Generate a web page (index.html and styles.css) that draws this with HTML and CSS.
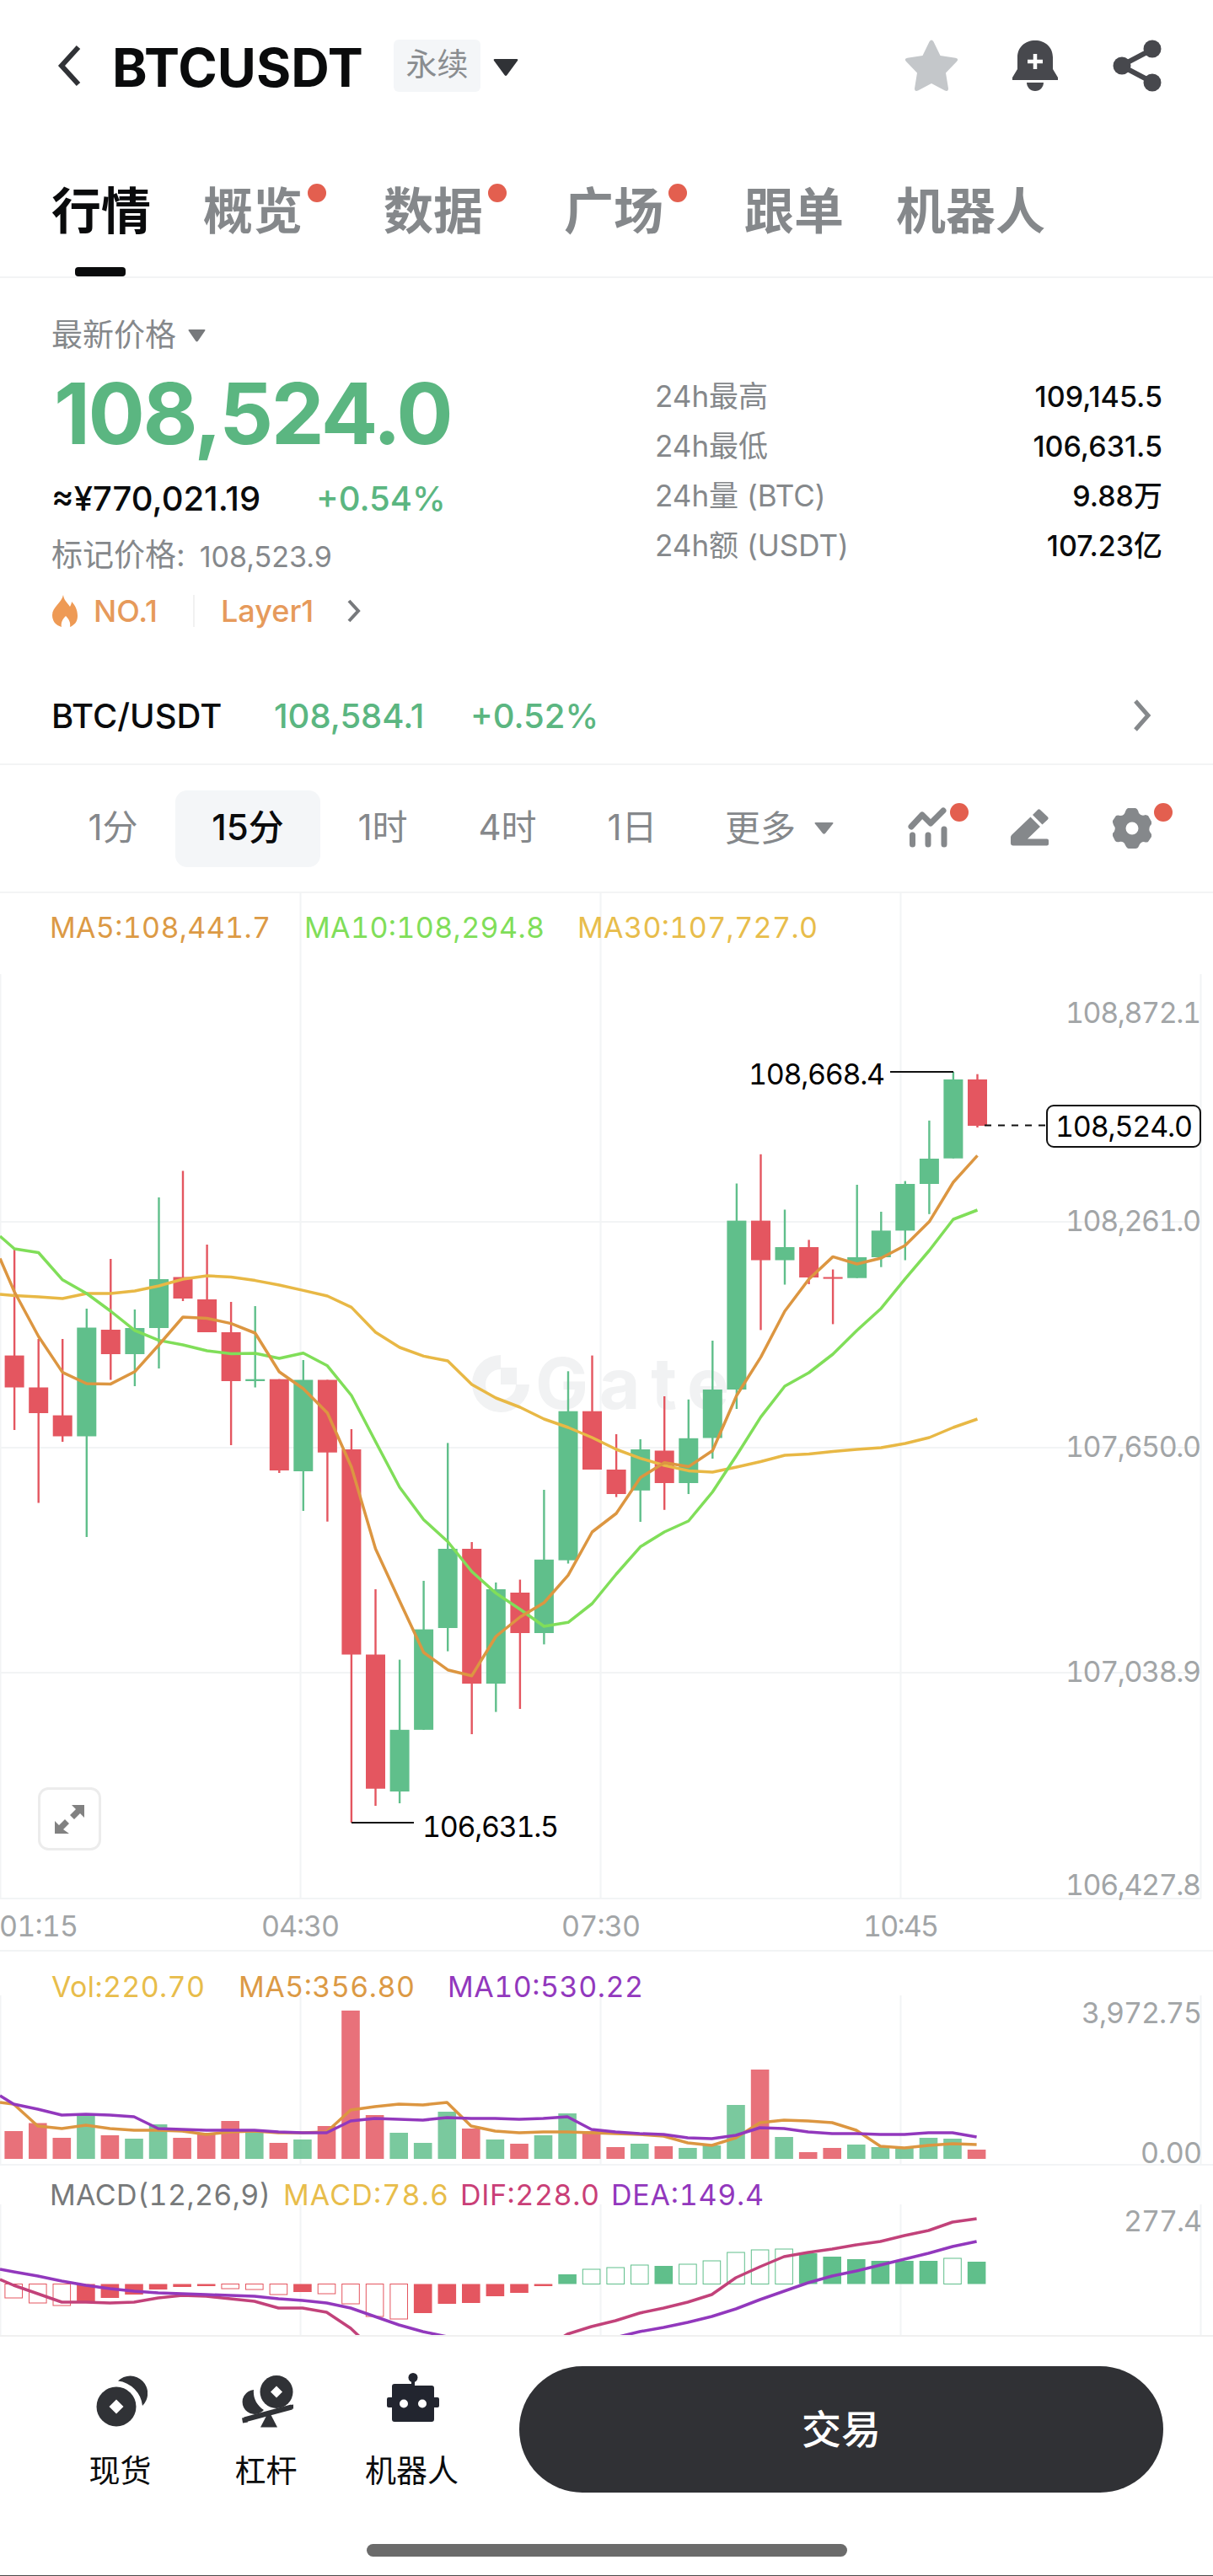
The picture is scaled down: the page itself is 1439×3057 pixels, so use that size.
FILE: index.html
```
<!DOCTYPE html>
<html lang="zh-CN">
<head>
    <meta charset="utf-8">
    <meta name="viewport" content="width=device-width, initial-scale=1.0">
    <title>BTCUSDT 永续</title>
    <link rel="stylesheet" href="styles.css">
</head>
<body>
    <header class="header">
        <svg class="back" width="34" height="56" viewBox="0 0 34 56"><path d="M28 6L8 28L28 50" fill="none" stroke="#303236" stroke-width="6"/></svg>
        <h1 class="symbol">BTCUSDT</h1>
        <span class="badge">永续</span>
        <svg class="symbol-caret" width="30" height="22" viewBox="0 0 30 22"><path d="M2 1h26q2 0 1 2L16.500 20q-1.500 2-3 0L1 3q-1-2 1-2z" fill="#303236"/></svg>
        <div class="header-icons">
            <svg width="64" height="62" viewBox="0 0 64 62"><path d="M29.500 2.500q2.500-4 5 0l8 16.500 18 2.700q4.500 1 1.500 4.300L49 39.500l3 18.500q0 4-4 2.500L32 52 16 60.500q-4 1.500-4-2.500l3-18.500L2 26q-3-3.300 1.500-4.300L21.500 19z" fill="#c4c7ca"/></svg>
            <svg width="56" height="62" viewBox="0 0 56 62"><path d="M28 1C16 1 7 9 7 21v14L1 45v3h54v-3l-6-10V21C49 9 40 1 28 1z" fill="#47484d"/><path d="M18 51h20c0 5-4 10-10 10s-10-5-10-10z" fill="#47484d"/><path d="M28 17v18M19 26h18" stroke="#fff" stroke-width="4.500"/></svg>
            <svg width="60" height="62" viewBox="0 0 60 62"><path d="M49 11L11 31l38 20" fill="none" stroke="#47484d" stroke-width="6"/><circle cx="48" cy="11" r="10.500" fill="#47484d"/><circle cx="12" cy="31" r="10.500" fill="#47484d"/><circle cx="48" cy="51" r="10.500" fill="#47484d"/></svg>
        </div>
    </header>

    <nav class="tabs">
        <a class="tab on">行情</a>
        <a class="tab">概览<i class="dot"></i></a>
        <a class="tab">数据<i class="dot"></i></a>
        <a class="tab">广场<i class="dot"></i></a>
        <a class="tab">跟单</a>
        <a class="tab">机器人</a>
    </nav>

    <section class="quote">
        <div class="quote-main">
            <div class="price-type">最新价格 <svg width="21" height="15" viewBox="0 0 21 15"><path d="M1.500 0h18q1.500 0 .7 1.500L12 13.500q-1.500 2-3 0L.8 1.500Q0 0 1.500 0z" fill="#77797c"/></svg></div>
            <div class="price">108,524.0</div>
            <div class="fiat"><span class="fiat-value">≈¥770,021.19</span><span class="up">+0.54%</span></div>
            <div class="mark">标记价格: <span class="mark-value">108,523.9</span></div>
            <div class="rank">
                <svg width="32" height="38" viewBox="0 0 32 38"><path d="M14 0c1 7 5 9 8 14 1-2 2-4 2-6 5 5 7 11 7 17 0 7-4 11-9 13 1-5-1-9-5-13-4 4-6 8-5 13C5 36 1 31 1 24 1 14 12 10 14 0z" fill="#ee9a55"/></svg>
                <span class="rank-no">NO.1</span>
                <i class="rank-line"></i>
                <span class="rank-tag">Layer1</span>
                <svg width="20" height="28" viewBox="0 0 20 28"><path d="M4 2l11 12L4 26" fill="none" stroke="#77797c" stroke-width="4"/></svg>
            </div>
        </div>
        <dl class="stats">
            <dt>24h最高</dt><dd>109,145.5</dd>
            <dt>24h最低</dt><dd>106,631.5</dd>
            <dt>24h量 (BTC)</dt><dd>9.88<b>万</b></dd>
            <dt>24h额 (USDT)</dt><dd>107.23<b>亿</b></dd>
        </dl>
    </section>

    <section class="spot">
        <span class="spot-name">BTC/USDT</span>
        <span class="spot-price">108,584.1</span>
        <span class="spot-rate">+0.52%</span>
        <svg class="spot-more" width="24" height="40" viewBox="0 0 24 40"><path d="M4 3l15 17L4 37" fill="none" stroke="#85888b" stroke-width="5"/></svg>
    </section>

    <nav class="intervals">
        <a class="interval">1分</a>
        <a class="interval on">15分</a>
        <a class="interval">1时</a>
        <a class="interval">4时</a>
        <a class="interval">1日</a>
        <a class="interval more">更多 <svg width="23" height="14" viewBox="0 0 23 14"><path d="M1.500 0h20q1.500 0 .7 1.500L13 13q-1.500 1.500-3 0L.8 1.500Q0 0 1.500 0z" fill="#85888b"/></svg></a>
        <div class="tools">
            <span class="tool">
                <svg width="48" height="48" viewBox="0 0 48 48"><path d="M4 23L17 9l10 10L42 4" fill="none" stroke="#85888b" stroke-width="7" stroke-linecap="round" stroke-linejoin="round"/><path d="M5.500 33v11M24 33v11M43 26v18" stroke="#85888b" stroke-width="7" stroke-linecap="round"/></svg>
                <i class="dot"></i>
            </span>
            <span class="tool">
                <svg width="48" height="48" viewBox="0 0 48 48"><path d="M2 33L24.500 11.500 36 23 21 37.500h23q2 0 2 2v4q0 2-2 2H4q-3 0-3-3V35z" fill="#85888b"/><path d="M27 9l6-6q1.500-1.500 3 0l9 8.500q1.500 1.500 0 3L38.500 20.500z" fill="#85888b"/></svg>
            </span>
            <span class="tool">
                <svg width="48" height="50" viewBox="0 0 48 50"><path d="M19 1h9q3 1 4 6 3 4 8 2l3 1 4 7v3q-4 4-2 9l2 3v3l-4 6q-2 1-5 0-4 0-6 5-1 3-4 3h-8q-2 0-4-4-2-5-7-4-3 1-5-1l-3-6v-3q5-5 1-10l-1-3v-2l4-6q2-1 5 0 5 0 6-5 1-3 3-4z" fill="#85888b"/><circle cx="24" cy="25" r="7.500" fill="#fff"/></svg>
                <i class="dot"></i>
            </span>
        </div>
    </nav>

    <section class="charts">
        <svg class="chart" width="1439" height="1256" viewBox="0 1060 1439 1256">
            <g class="grid">
                <path d="M356.500 1060V2253M712.500 1060V2253M1068.500 1060V2253M.5 1156V2253M1424.500 1156V2253"/>
                <path d="M0 1450H1425M0 1718H1425M0 1985H1425M0 2253H1425"/>
                <path d="M0 2315H1439"/>
            </g>
            <g class="watermark">
                <path d="M594 1608v17a18 18 0 1 0 18 18h16a34 34 0 1 1-34-35z"/>
                <rect x="594" y="1623" width="19" height="20"/>
                <text x="635" y="1672" textLength="230">Gate</text>
            </g>
            <g id="candles"></g>
            <text class="ma-orange" x="59" y="1113" textLength="262">MA5:108,441.7</text>
            <text class="ma-green" x="361" y="1113" textLength="285">MA10:108,294.8</text>
            <text class="ma-yellow" x="685" y="1113" textLength="285">MA30:107,727.0</text>
            <g class="scale">
                <text x="1264" y="1214" textLength="161">108,872.1</text>
                <text x="1264" y="1461" textLength="161">108,261.0</text>
                <text x="1264" y="1729" textLength="161">107,650.0</text>
                <text x="1264" y="1996" textLength="161">107,038.9</text>
                <text x="1264" y="2249" textLength="161">106,427.8</text>
                <text x="-1" y="2298" textLength="94">01:15</text>
                <text x="310" y="2298" textLength="93">04:30</text>
                <text x="666" y="2298" textLength="94">07:30</text>
                <text x="1024" y="2298" textLength="90">10:45</text>
            </g>
            <path class="mark-line" d="M1056 1272H1131M417 2163H491"/>
            <path class="mark-line dashed" d="M1168 1335.500H1240"/>
            <text class="mark-text" x="888" y="1287" textLength="162">108,668.4</text>
            <text class="mark-text" x="501" y="2180" textLength="162">106,631.5</text>
            <rect class="now-box" x="1242" y="1312" width="182" height="49" rx="8"/>
            <text class="mark-text" x="1252" y="1349" textLength="163">108,524.0</text>
            <g>
                <rect x="46.500" y="2122.500" width="72" height="72" rx="11" fill="#fff" stroke="#ececec" stroke-width="3"/>
                <path d="M85 2142h15v15l-5-5-7 7-5-5 7-7zM65 2161l5 5 7-7 5 5-7 7 7 5H65z" fill="#818181"/>
            </g>
        </svg>
        <svg class="chart" width="1439" height="254" viewBox="0 2316 1439 254">
            <path class="grid" d="M356.500 2368V2570M712.500 2368V2570M1068.500 2368V2570M.5 2368V2570M1424.500 2368V2570M0 2569H1439"/>
            <g id="volume"></g>
            <text class="ma-yellow" x="61" y="2370" textLength="182">Vol:220.70</text>
            <text class="ma-orange" x="283" y="2370" textLength="209">MA5:356.80</text>
            <text class="ma-purple" x="531" y="2370" textLength="232">MA10:530.22</text>
            <g class="scale">
                <text x="1283" y="2401" textLength="143">3,972.75</text>
                <text x="1353" y="2567" textLength="73">0.00</text>
            </g>
        </svg>
        <svg class="chart" width="1439" height="201" viewBox="0 2570 1439 201">
            <path class="grid" d="M356.500 2616V2771M712.500 2616V2771M1068.500 2616V2771M.5 2616V2771M1424.500 2616V2771"/>
            <g id="macd"></g>
            <text class="macd-name" x="59" y="2617" textLength="262">MACD(12,26,9)</text>
            <text class="ma-yellow" x="336" y="2617" textLength="196">MACD:78.6</text>
            <text class="ma-pink" x="546" y="2617" textLength="165">DIF:228.0</text>
            <text class="ma-purple" x="725" y="2617" textLength="181">DEA:149.4</text>
            <text class="scale" x="1333" y="2648" textLength="93">277.4</text>
        </svg>
    </section>

    <footer class="footer">
        <div class="actions">
            <a class="action">
                <svg width="64" height="68" viewBox="0 0 64 68"><path d="M29 12.500A20 20 0 0 1 58 42 33 33 0 0 0 29 12.500z" fill="#303236"/><circle cx="27" cy="43" r="23.500" fill="#303236"/><path d="M27 34.500l8.500 8.500-8.500 8.500-8.500-8.500z" fill="#fff"/></svg>
                现货
            </a>
            <a class="action">
                <svg width="64" height="68" viewBox="0 0 64 68"><path d="M17 23c-1 9 3 18 12 24A14.500 14.500 0 1 1 17 23z" fill="#303236"/><circle cx="44" cy="25.500" r="19.500" fill="#303236"/><path d="M44 18.500l7 7-7 7-7-7z" fill="#fff"/><path d="M6 58.500l56-15M7 62l-1-6M62 46l-1-5" stroke="#303236" stroke-width="6" fill="none"/><path d="M32 54l5-2 8 15.500H25z" fill="#303236"/></svg>
                杠杆
            </a>
            <a class="action">
                <svg width="64" height="68" viewBox="0 0 64 68"><circle cx="33" cy="8.500" r="5.500" fill="#22252f"/><path d="M31 12h4v6h20q3 0 3 3v11h4q2 0 2 2v8q0 2-2 2h-4v14q0 3-3 3H11q-3 0-3-3V44H4q-2 0-2-2v-8q0-2 2-2h4V19q0-3 3-3h20z" fill="#22252f"/><circle cx="22" cy="39.500" r="5" fill="#fff"/><circle cx="44" cy="39.500" r="5" fill="#fff"/></svg>
                机器人
            </a>
        </div>
        <button class="trade">交易</button>
    </footer>
    <div class="home"></div>

    <script src="chart.js"></script>
</body>
</html>
```

FILE: styles.css
```
* { box-sizing: border-box; }
body {
    margin: 0;
    width: 1439px;
    height: 3057px;
    overflow: hidden;
    background: #fff;
    color: #0a0b0c;
    font-family: Inter, "Noto Sans CJK SC", sans-serif;
    border-bottom: 1px solid #4d4d4d;
}
svg { display: block; flex: none; }
i, b { font-style: normal; font-weight: inherit; }

/* header */
.header { display: flex; align-items: center; height: 156px; padding: 0 60px 0 65px; }
.symbol { margin: 0 0 0 34px; font-size: 63px; font-weight: 700; line-height: 64px; width: 334px; margin-top: 3px; letter-spacing: 0; white-space: nowrap; }
.badge { width: 103px; height: 62px; border-radius: 6px; background: #f4f6f8; color: #8a8d90; font-size: 37px; line-height: 60px; text-align: center; }
.symbol-caret { margin: 4px 0 0 15px; }
.header-icons { display: flex; align-items: center; gap: 63px; margin-left: auto; }

/* tabs */
.tabs { display: flex; gap: 62px; height: 174px; padding-left: 61px; border-bottom: 2px solid #f3f4f5; }
.tab { position: relative; display: flex; height: 172px; padding-top: 52px; font-size: 59px; font-weight: 700; line-height: 86px; color: #85888b; }
.tab.on { color: #0a0b0c; }
.tab.on::after { content: ""; position: absolute; left: 28px; bottom: 0; width: 60px; height: 11px; border-radius: 4px; background: #0a0b0c; }
.dot { display: block; width: 22px; height: 22px; border-radius: 50%; background: #e35f4f; }
.tab .dot { margin: 10px 6px 0; }

/* price block */
.quote { display: flex; justify-content: space-between; height: 464px; padding: 44px 60px 0 61px; }
.price-type { display: flex; align-items: center; gap: 14px; height: 48px; font-size: 37px; line-height: 48px; color: #85888b; }
.price { height: 138px; margin-left: 3px; font-size: 100px; font-weight: 700; line-height: 138px; color: #5bb681; letter-spacing: -2.5px; }
.fiat { display: flex; height: 64px; font-size: 40px; font-weight: 500; line-height: 64px; }
.fiat-value { width: 314px; }
.up { color: #5bb681; }
.mark { display: flex; gap: 17px; height: 70px; font-size: 37px; line-height: 70px; color: #85888b; }
.mark-value { font-size: 34px; line-height: 74px; }
.rank { display: flex; align-items: center; height: 62px; font-size: 36px; font-weight: 500; color: #e69a5b; }
.rank-no { width: 117px; padding-left: 18px; }
.rank-line { width: 2px; height: 38px; margin-left: 19px; background: #f1f1f1; }
.rank-tag { width: 148px; margin: 0 0 0 31px; }
.stats { display: grid; grid-template-columns: auto auto; grid-auto-rows: 59px; width: 602px; margin: 67px 0 0; font-size: 35px; line-height: 59px; }
.stats dt { color: #85888b; }
.stats dd { margin: 0; text-align: right; font-size: 34px; font-weight: 500; }

/* spot pair */
.spot { display: flex; align-items: center; height: 114px; padding: 0 72px 2px 61px; border-bottom: 2px solid #f3f4f5; font-size: 40px; font-weight: 500; }
.spot-name { width: 264px; }
.spot-price { width: 233px; }
.spot-price, .spot-rate { color: #5bb681; }
.spot-more { margin-left: auto; }

/* intervals */
.intervals { display: flex; align-items: center; height: 152px; padding: 0 60px 0 60px; border-bottom: 2px solid #f3f4f5; font-size: 42px; color: #85888b; }
.interval { width: 148px; height: 91px; line-height: 88px; text-align: center; white-space: nowrap; }
.interval.on { width: 172px; border-radius: 14px; background: #f4f6f8; color: #0a0b0c; font-weight: 500; }
.interval.more { display: flex; align-items: center; gap: 22px; width: 171px; margin-left: 36px; }
.tools { display: flex; gap: 73px; margin-left: 46px; }
.tool { position: relative; }
.tool .dot { position: absolute; left: 50px; top: -5px; }

/* charts */
.charts { height: 1713px; border-bottom: 2px solid #f0f0f0; }
.chart { font-size: 34px; font-feature-settings: "tnum"; }
.grid { fill: none; stroke: #f2f4f5; stroke-width: 2; }
.watermark { fill: #f1f2f3; font-size: 84px; font-weight: 700; }
.ma-orange { fill: #dc9a45; }
.ma-green { fill: #80de59; }
.ma-yellow { fill: #e8bd4b; }
.ma-purple { fill: #9238bd; }
.ma-pink { fill: #c93f77; }
.macd-name { fill: #77797a; }
.scale { fill: #a2a5a7; }
.mark-text { fill: #000; }
.mark-line { fill: none; stroke: #111; stroke-width: 2; }
.mark-line.dashed { stroke-dasharray: 8 8; }
.now-box { fill: #fff; stroke: #111; stroke-width: 2; }
.line { fill: none; stroke-width: 3.500; stroke-linejoin: round; }
.line.orange { stroke: #dc9641; }
.line.green { stroke: #80de59; }
.line.yellow { stroke: #e8b845; }
.line.purple { stroke: #9238bd; }
.line.pink { stroke: #c2427a; }

/* bottom bar */
.footer { display: flex; align-items: flex-start; height: 246px; padding: 35px 59px 0 56px; }
.actions { display: flex; width: 560px; }
.action { display: flex; flex-direction: column; align-items: center; width: 173px; padding-top: 5px; font-size: 37px; line-height: 54px; }
.action svg { margin-bottom: 25px; }
.trade { width: 764px; height: 150px; padding: 0; border: 0; border-radius: 75px; background: #303135; color: #fff; font: 500 47px/146px Inter, "Noto Sans CJK SC", sans-serif; }
.home { width: 570px; height: 15px; margin-left: 435px; border-radius: 8px; background: #6b6b6b; }
```

FILE: chart.js
```
var UP = '#60bf8b';
var DOWN = '#e45660';
var STEP = 28.56;

// direction, high, body top, body bottom, low
var candles = [
    ['d', 1482, 1608.6, 1646.5, 1697], ['d', 1589, 1646.5, 1677, 1783.5], ['d', 1589, 1679.6, 1704.5, 1711],
    ['u', 1553, 1575.5, 1704.5, 1824], ['d', 1494, 1578, 1607, 1637.5], ['u', 1554, 1576, 1607, 1645],
    ['u', 1421, 1518, 1576, 1624], ['d', 1389.5, 1515.5, 1541, 1544], ['d', 1477, 1542, 1581, 1581],
    ['d', 1545, 1581, 1639, 1715], ['u', 1550, 1636.7, 1639, 1646.5], ['d', 1636.7, 1636.7, 1745, 1748],
    ['u', 1614, 1637.5, 1746, 1793], ['d', 1637.5, 1637.5, 1723.7, 1805.7], ['d', 1696, 1720, 1963.5, 2163],
    ['d', 1886, 1963.5, 2122.7, 2143], ['u', 1969.6, 2052.8, 2126, 2140], ['u', 1876, 1933.6, 2052.8, 2052.8],
    ['u', 1712.4, 1838, 1932, 1959.6], ['d', 1830, 1838, 1998, 2058], ['u', 1878, 1886, 1998, 2031.6],
    ['d', 1874.6, 1890, 1938, 2028], ['u', 1768, 1850.8, 1938, 1951.4], ['u', 1627.3, 1674.7, 1851.6, 1855.5],
    ['d', 1608.6, 1674.7, 1744, 1744], ['d', 1702, 1744, 1773, 1776.6], ['u', 1708, 1720, 1768.8, 1806],
    ['d', 1657, 1721.5, 1760, 1791.8], ['u', 1660.8, 1706.8, 1760, 1773], ['u', 1591, 1649, 1706.5, 1731],
    ['u', 1404.5, 1448.6, 1649, 1672], ['d', 1369.8, 1448.6, 1495.5, 1578.4], ['u', 1435.5, 1480, 1495.5, 1524.5],
    ['d', 1471.4, 1480, 1516, 1524], ['d', 1506.5, 1515.5, 1517.6, 1571.4], ['u', 1406, 1492, 1516.7, 1516.7],
    ['u', 1438, 1460.4, 1492, 1503.7], ['u', 1401.6, 1405, 1460.4, 1495.5], ['u', 1329.8, 1375, 1405, 1440.8],
    ['u', 1272, 1281, 1374.7, 1374.7], ['d', 1274.7, 1281, 1336, 1338]
];

var volumes = [2529, 2519.5, 2537, 2510, 2534, 2538, 2521, 2537, 2531, 2517, 2529, 2543, 2539, 2523, 2386, 2510, 2531, 2543, 2506, 2526, 2539,
    2544, 2534, 2508, 2529, 2548, 2544, 2547, 2549, 2546, 2498, 2456, 2536, 2554, 2549, 2545, 2548, 2548, 2537, 2538, 2551];

// 1 = filled, 0 = outlined
var macdFill = '00011111100010000111111' + '100010000011111101';
macdFill = macdFill.replace(/^(.{9})(.{3})(.)/, '$1$2$3');
var macdEnds = [2727, 2733, 2736, 2732, 2727, 2723, 2717, 2714, 2713, 2716, 2717, 2723, 2720, 2722, 2734, 2749, 2752, 2745, 2734, 2733, 2725,
    2721, 2713, 2699, 2693, 2691, 2688, 2689, 2687, 2683, 2673, 2670, 2669, 2674, 2678, 2681, 2683, 2683, 2683, 2680, 2684];

// first value of every line is where it enters at the left edge
var ma5 = [1493.5, 1533, 1586, 1628.6, 1642, 1642.4, 1627.8, 1596, 1563, 1564.5, 1570.6, 1582, 1628, 1648, 1676.7, 1741, 1838, 1900, 1961, 1981.7, 1988.7,
    1942, 1919, 1902, 1869.4, 1818, 1796, 1753.6, 1735.8, 1740.6, 1721.5, 1656, 1610.6, 1556, 1518, 1491.4, 1500, 1493, 1478, 1449.8, 1403, 1371.4];
var ma10 = [1467, 1482, 1486.5, 1518.8, 1535, 1556, 1578.8, 1590.6, 1596, 1603, 1606.5, 1606, 1612, 1605.7, 1620.8, 1656, 1710.7, 1765, 1803.5, 1829.5, 1865,
    1890.6, 1909.7, 1930, 1925.3, 1903, 1868, 1835.6, 1818, 1805, 1770.5, 1727, 1681.6, 1645, 1629, 1607, 1578.8, 1552.7, 1517.6, 1484, 1447, 1436];
var ma30 = [1536, 1537.5, 1539, 1541, 1535, 1535, 1532, 1526, 1518, 1514, 1515.5, 1519.6, 1525, 1531.4, 1538, 1551.4, 1581, 1599, 1609.4, 1615, 1643,
    1659, 1670, 1684, 1694, 1706, 1720, 1730.6, 1739, 1745.4, 1747, 1741, 1734.5, 1727, 1725.4, 1722.4, 1720, 1718, 1713, 1706, 1694, 1684];
var vol5 = [2495, 2497, 2523, 2526, 2522, 2526, 2528, 2528, 2529, 2533, 2530, 2529, 2531, 2531, 2530, 2504, 2500, 2497, 2498, 2495, 2523,
    2529, 2531, 2530, 2530, 2531, 2532, 2533, 2535, 2543, 2546, 2537, 2519, 2516, 2517, 2519, 2528, 2547, 2549, 2546, 2544, 2545];
var vol10 = [2487, 2497, 2503, 2510, 2509, 2510, 2512, 2526, 2527, 2528, 2528, 2528, 2530, 2531, 2531, 2517, 2514, 2515, 2516, 2513, 2514,
    2514, 2515, 2514, 2512, 2527, 2530, 2532, 2533, 2537, 2538, 2534, 2525, 2526, 2530, 2532, 2532, 2533, 2533, 2531, 2531, 2536];
var dif = [2705, 2712, 2722, 2732, 2732, 2733, 2732, 2727, 2724, 2725, 2728, 2731, 2739, 2739, 2744, 2763, 2790, 2800, 2810, 2815, 2820,
    2815, 2805, 2788, 2770, 2761, 2754, 2745, 2739, 2732, 2723, 2703, 2690, 2678, 2673, 2669, 2664, 2660, 2653, 2647, 2637, 2633];
var dea = [2693, 2696, 2701, 2707, 2712, 2716, 2719, 2721, 2722, 2723, 2724, 2725, 2728, 2730, 2733, 2739, 2749, 2759, 2767, 2773, 2780,
    2785, 2790, 2790, 2785, 2780, 2774, 2767, 2762, 2756, 2749, 2740, 2729, 2719, 2709, 2701, 2695, 2688, 2681, 2674, 2666, 2660];

function rect(x, y, w, h, attrs) {
    return '<rect x="' + x.toFixed(1) + '" y="' + y + '" width="' + w + '" height="' + h.toFixed(1) + '" ' + attrs + '/>';
}

function line(values, color, first) {
    var points = '0,' + values[0];
    for (var i = 1; i < values.length; i++) {
        points += ' ' + (first + (i - 1) * STEP).toFixed(1) + ',' + values[i];
    }
    return '<polyline class="line ' + color + '" points="' + points + '"/>';
}

function draw() {
    var main = '', volume = '', macd = '';
    for (var i = 0; i < candles.length; i++) {
        var c = candles[i];
        var color = c[0] == 'u' ? UP : DOWN;
        var x = 17.1 + i * STEP;
        main += rect(x - 1.2, c[1], 2.4, c[4] - c[1], 'fill="' + color + '"');
        main += rect(x - 11.5, c[2], 23, c[3] - c[2], 'fill="' + color + '"');

        x = 16.2 + i * STEP;
        volume += rect(x - 10.8, volumes[i], 21.6, 2562 - volumes[i], 'fill="' + color + '" fill-opacity=".84"');

        var end = macdEnds[i];
        var up = end < 2710;
        color = up ? UP : DOWN;
        var top = Math.min(end, 2710.5);
        var height = Math.abs(end - 2710.5);
        if (macdFill.charAt(i) == '1') {
            macd += rect(x - 10.8, top, 21.6, height, 'fill="' + color + '"');
        } else {
            macd += rect(x - 10.3, top, 20.6, height, 'fill="#fff" stroke="' + color + '" stroke-width="1"');
        }
    }
    main += line(ma30, 'yellow', 17.1) + line(ma10, 'green', 17.1) + line(ma5, 'orange', 17.1);
    volume += line(vol5, 'orange', 16.2) + line(vol10, 'purple', 16.2);
    macd += line(dif, 'pink', 16.2) + line(dea, 'purple', 16.2);

    document.getElementById('candles').innerHTML = main;
    document.getElementById('volume').innerHTML = volume;
    document.getElementById('macd').innerHTML = macd;
}

draw();
```
